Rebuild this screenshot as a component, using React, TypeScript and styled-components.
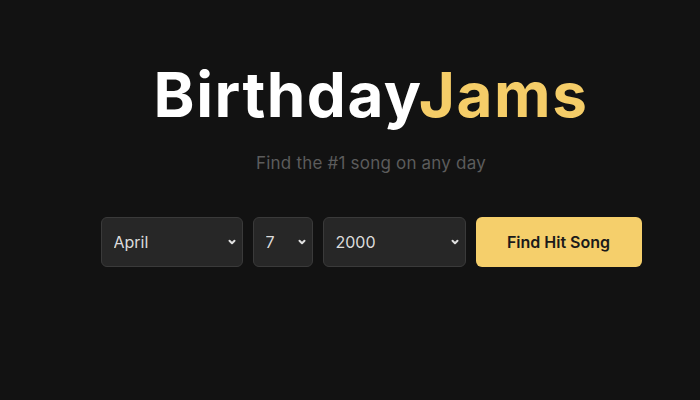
import React from "react";
import styled, { createGlobalStyle } from "styled-components";

const Global = createGlobalStyle`
  html, body { margin: 0; padding: 0; background: #121212; }
  body { font-family: Inter, "Noto Sans", sans-serif; }
`;

const Page = styled.div`
  width: 700px;
  height: 400px;
  box-sizing: border-box;
  padding: 57px 0 0 42px;
  display: flex;
  flex-direction: column;
  align-items: center;
  background: #121212;
`;

const Title = styled.h1`
  margin: 0;
  font-size: 62px;
  font-weight: 700;
  letter-spacing: 1.5px;
  line-height: 76px;
  color: #ffffff;
`;

const Accent = styled.span`
  color: #f5cd68;
`;

const Subtitle = styled.p`
  margin: 18px 0 0;
  font-size: 17px;
  letter-spacing: 0.2px;
  line-height: 24px;
  color: #5c5c5c;
`;

const Form = styled.div`
  margin-top: 42px;
  display: flex;
  gap: 10px;
`;

const SelectWrap = styled.div<{ $w: number }>`
  position: relative;
  width: ${(p) => p.$w}px;
  height: 50px;
`;

const Select = styled.select`
  appearance: none;
  width: 100%;
  height: 100%;
  box-sizing: border-box;
  padding: 0 28px 0 12px;
  background: #272727;
  border: 1px solid #3a3a3a;
  border-radius: 6px;
  color: #dcdcdc;
  font-family: inherit;
  font-size: 16px;
  outline: none;
`;

const Chevron = styled.svg`
  position: absolute;
  right: 5px;
  top: 50%;
  margin-top: -6px;
  width: 12px;
  height: 12px;
  pointer-events: none;
`;

const Button = styled.button`
  width: 166px;
  height: 50px;
  border: none;
  border-radius: 6px;
  background: #f5cf6b;
  color: #1a1a1a;
  font-family: inherit;
  font-size: 16px;
  font-weight: 600;
`;

const Arrow = () => (
  <Chevron viewBox="0 0 12 12">
    <path d="M3.5 4.8 L6 7.3 L8.5 4.8" fill="none" stroke="#e0e0e0" strokeWidth="2" strokeLinecap="round" strokeLinejoin="round" />
  </Chevron>
);

const months = ["January","February","March","April","May","June","July","August","September","October","November","December"];

export default function App() {
  return (
    <>
      <Global />
      <Page>
        <Title>
          Birthday<Accent>Jams</Accent>
        </Title>
        <Subtitle>Find the #1 song on any day</Subtitle>
        <Form>
          <SelectWrap $w={142}>
            <Select defaultValue="April">
              {months.map((m) => (
                <option key={m}>{m}</option>
              ))}
            </Select>
            <Arrow />
          </SelectWrap>
          <SelectWrap $w={60}>
            <Select defaultValue="7">
              {Array.from({ length: 31 }, (_, i) => (
                <option key={i}>{i + 1}</option>
              ))}
            </Select>
            <Arrow />
          </SelectWrap>
          <SelectWrap $w={143}>
            <Select defaultValue="2000">
              {Array.from({ length: 60 }, (_, i) => (
                <option key={i}>{1970 + i}</option>
              ))}
            </Select>
            <Arrow />
          </SelectWrap>
          <Button>Find Hit Song</Button>
        </Form>
      </Page>
    </>
  );
}
